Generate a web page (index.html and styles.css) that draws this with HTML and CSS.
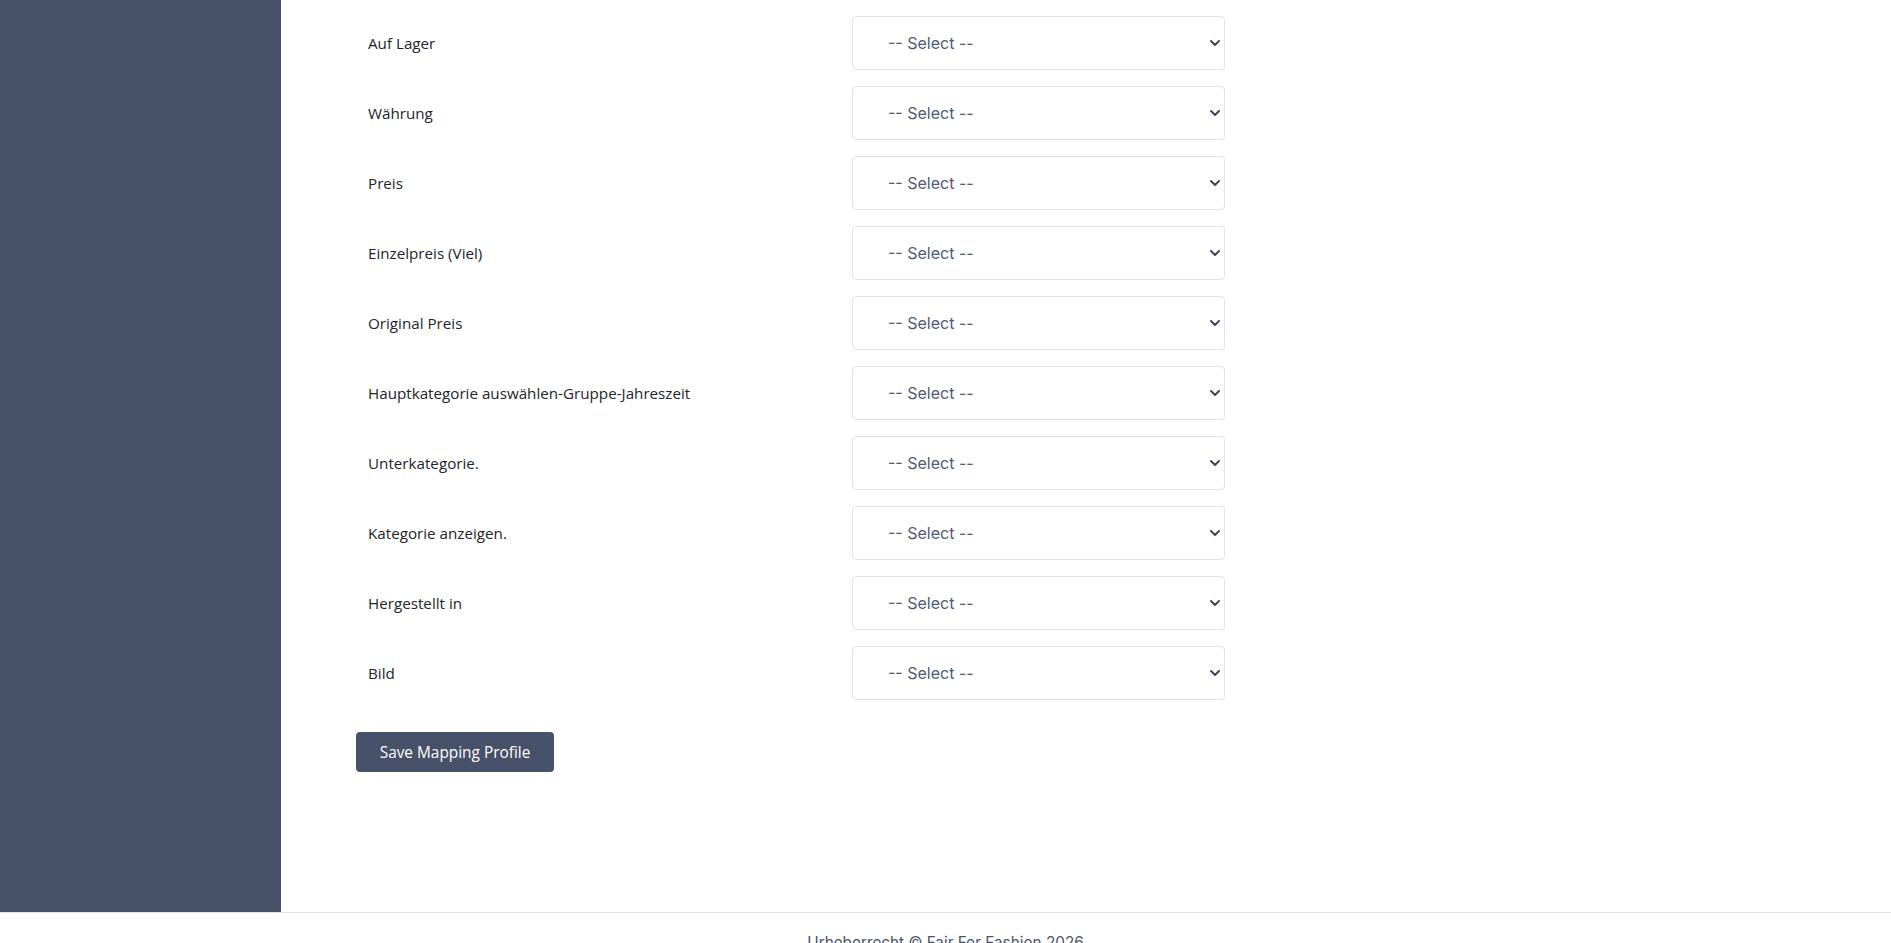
FILE: index.html
```html
<!DOCTYPE html>
<html lang="de">
<head>
<meta charset="utf-8">
<title>Mapping Profile</title>
<link rel="stylesheet" href="styles.css">
</head>
<body>
<div class="layout">
  <aside class="sidebar"></aside>
  <main class="main">
    <form class="mapping-form">
      <div class="field-row">
        <label class="field-label">Auf Lager</label>
        <div class="select-wrap">
          <select class="field-select"><option>-- Select --</option></select>
          <svg class="chevron" viewBox="0 0 10 6" width="10" height="6"><path d="M1 1 L5 5 L9 1" fill="none" stroke="#3e4559" stroke-width="1.9" stroke-linecap="round" stroke-linejoin="round"/></svg>
        </div>
      </div>
      <div class="field-row">
        <label class="field-label">Währung</label>
        <div class="select-wrap">
          <select class="field-select"><option>-- Select --</option></select>
          <svg class="chevron" viewBox="0 0 10 6" width="10" height="6"><path d="M1 1 L5 5 L9 1" fill="none" stroke="#3e4559" stroke-width="1.9" stroke-linecap="round" stroke-linejoin="round"/></svg>
        </div>
      </div>
      <div class="field-row">
        <label class="field-label">Preis</label>
        <div class="select-wrap">
          <select class="field-select"><option>-- Select --</option></select>
          <svg class="chevron" viewBox="0 0 10 6" width="10" height="6"><path d="M1 1 L5 5 L9 1" fill="none" stroke="#3e4559" stroke-width="1.9" stroke-linecap="round" stroke-linejoin="round"/></svg>
        </div>
      </div>
      <div class="field-row">
        <label class="field-label">Einzelpreis (Viel)</label>
        <div class="select-wrap">
          <select class="field-select"><option>-- Select --</option></select>
          <svg class="chevron" viewBox="0 0 10 6" width="10" height="6"><path d="M1 1 L5 5 L9 1" fill="none" stroke="#3e4559" stroke-width="1.9" stroke-linecap="round" stroke-linejoin="round"/></svg>
        </div>
      </div>
      <div class="field-row">
        <label class="field-label">Original Preis</label>
        <div class="select-wrap">
          <select class="field-select"><option>-- Select --</option></select>
          <svg class="chevron" viewBox="0 0 10 6" width="10" height="6"><path d="M1 1 L5 5 L9 1" fill="none" stroke="#3e4559" stroke-width="1.9" stroke-linecap="round" stroke-linejoin="round"/></svg>
        </div>
      </div>
      <div class="field-row">
        <label class="field-label">Hauptkategorie auswählen-Gruppe-Jahreszeit</label>
        <div class="select-wrap">
          <select class="field-select"><option>-- Select --</option></select>
          <svg class="chevron" viewBox="0 0 10 6" width="10" height="6"><path d="M1 1 L5 5 L9 1" fill="none" stroke="#3e4559" stroke-width="1.9" stroke-linecap="round" stroke-linejoin="round"/></svg>
        </div>
      </div>
      <div class="field-row">
        <label class="field-label">Unterkategorie.</label>
        <div class="select-wrap">
          <select class="field-select"><option>-- Select --</option></select>
          <svg class="chevron" viewBox="0 0 10 6" width="10" height="6"><path d="M1 1 L5 5 L9 1" fill="none" stroke="#3e4559" stroke-width="1.9" stroke-linecap="round" stroke-linejoin="round"/></svg>
        </div>
      </div>
      <div class="field-row">
        <label class="field-label">Kategorie anzeigen.</label>
        <div class="select-wrap">
          <select class="field-select"><option>-- Select --</option></select>
          <svg class="chevron" viewBox="0 0 10 6" width="10" height="6"><path d="M1 1 L5 5 L9 1" fill="none" stroke="#3e4559" stroke-width="1.9" stroke-linecap="round" stroke-linejoin="round"/></svg>
        </div>
      </div>
      <div class="field-row">
        <label class="field-label">Hergestellt in</label>
        <div class="select-wrap">
          <select class="field-select"><option>-- Select --</option></select>
          <svg class="chevron" viewBox="0 0 10 6" width="10" height="6"><path d="M1 1 L5 5 L9 1" fill="none" stroke="#3e4559" stroke-width="1.9" stroke-linecap="round" stroke-linejoin="round"/></svg>
        </div>
      </div>
      <div class="field-row">
        <label class="field-label">Bild</label>
        <div class="select-wrap">
          <select class="field-select"><option>-- Select --</option></select>
          <svg class="chevron" viewBox="0 0 10 6" width="10" height="6"><path d="M1 1 L5 5 L9 1" fill="none" stroke="#3e4559" stroke-width="1.9" stroke-linecap="round" stroke-linejoin="round"/></svg>
        </div>
      </div>
      <button type="button" class="save-btn">Save Mapping Profile</button>
    </form>
  </main>
</div>
<footer class="footer">Urheberrecht © Fair For Fashion 2026</footer>
</body>
</html>
```
FILE: styles.css
```css
html, body {
  margin: 0;
  padding: 0;
  background: #ffffff;
}
body {
  font-family: "Open Sans", "Noto Sans", sans-serif;
  color: #212529;
}
.layout {
  display: flex;
  min-height: 912px;
}
.sidebar {
  width: 281px;
  flex: 0 0 281px;
  background: #475169;
}
.main {
  flex: 1;
}
.mapping-form {
  margin-left: 75px;
  padding-top: 16px;
  display: flex;
  flex-direction: column;
  align-items: flex-start;
}
.field-row {
  display: flex;
  align-items: center;
  margin-bottom: 16px;
}
.field-label {
  width: 484px;
  padding-left: 12px;
  font-size: 15.2px;
  color: #212529;
}
.select-wrap {
  position: relative;
  width: 373px;
  height: 54px;
}
.field-select {
  appearance: none;
  -webkit-appearance: none;
  box-sizing: border-box;
  width: 100%;
  height: 100%;
  margin: 0;
  padding: 0 30px 0 35px;
  border: 1px solid #dfe3ee;
  border-radius: 4px;
  background: #ffffff;
  font-family: "Inter", "Open Sans", sans-serif;
  font-size: 16px;
  font-weight: 400;
  color: #4f5a73;
}
.chevron {
  position: absolute;
  right: 5px;
  top: 24px;
  pointer-events: none;
}
.save-btn {
  margin-top: 16px;
  width: 198px;
  height: 40px;
  border: none;
  border-radius: 4px;
  background: #475169;
  color: #ffffff;
  font-family: "Open Sans", "Noto Sans", sans-serif;
  font-size: 15.4px;
  cursor: pointer;
}
.footer {
  border-top: 1px solid #dfe3ee;
  padding-top: 18px;
  text-align: center;
  font-family: "Inter", "Open Sans", sans-serif;
  font-size: 15.3px;
  line-height: 24px;
  color: #4b5565;
}
```
